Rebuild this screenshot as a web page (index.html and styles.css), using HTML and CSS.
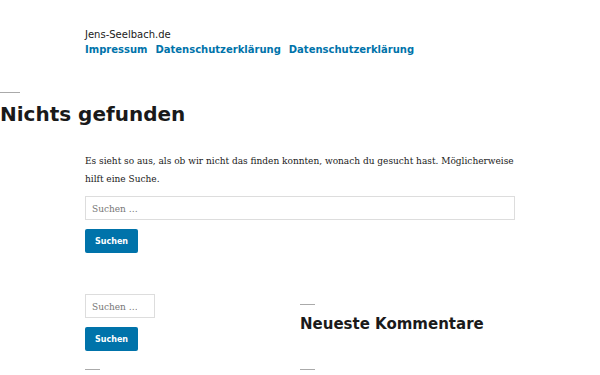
FILE: index.html
```html
<!DOCTYPE html>
<html lang="de">
<head>
	<meta charset="UTF-8">
	<title>Nichts gefunden – Jens-Seelbach.de</title>
	<link rel="stylesheet" href="styles.css">
</head>
<body>
	<header class="site-header">
		<p class="site-title">Jens-Seelbach.de</p>
		<nav class="site-nav">
			<a href="#">Impressum</a>
			<a href="#">Datenschutzerklärung</a>
			<a href="#">Datenschutzerklärung</a>
		</nav>
	</header>

	<main class="site-main">
		<div class="page-header">
			<hr class="sep sep-wide">
			<h1 class="page-title">Nichts gefunden</h1>
		</div>
		<div class="page-content">
			<p>Es sieht so aus, als ob wir nicht das finden konnten, wonach du gesucht hast. Möglicherweise hilft eine Suche.</p>
			<form class="search-form">
				<input type="search" class="search-field" placeholder="Suchen …">
				<button type="button" class="search-submit">Suchen</button>
			</form>
		</div>
	</main>

	<aside class="widgets">
		<div class="widget">
			<form class="search-form small">
				<input type="search" class="search-field" placeholder="Suchen …">
				<button type="button" class="search-submit">Suchen</button>
			</form>
			<hr class="sep">
		</div>
		<div class="widget">
			<hr class="sep">
			<h2 class="widget-title">Neueste Kommentare</h2>
			<hr class="sep">
		</div>
	</aside>
</body>
</html>
```

FILE: styles.css
```css
body{
	margin: 0;
	background: #fff;
	color: #1a1a1a;
	font-family: "DejaVu Sans", sans-serif;
}
.site-header{
	padding: 27px 0 0 85px;
}
.site-title{
	margin: 0;
	font-size: 10px;
	line-height: 15px;
	color: #1a1a1a;
}
.site-nav{
	display: flex;
	gap: 8px;
}
.site-nav a{
	font-size: 10px;
	line-height: 15px;
	font-weight: bold;
	color: #0073aa;
	text-decoration: none;
}
.sep{
	margin: 0;
	border: 0;
	height: 1px;
	width: 15px;
	background: #aaa;
}
.sep-wide{
	width: 20px;
}
.site-main{
	margin-top: 35px;
}
.page-title{
	margin: 9px 0 0;
	font-size: 20px;
	line-height: 24px;
	font-weight: bold;
}
.page-content{
	padding: 26px 0 0 85px;
	width: 430px;
}
.page-content p{
	margin: 0;
	font-family: "DejaVu Serif Condensed", "DejaVu Serif", serif;
	font-size: 10px;
	line-height: 18px;
	color: #1a1a1a;
}
.search-form{
	margin-top: 8px;
}
.search-field{
	display: block;
	box-sizing: border-box;
	width: 430px;
	height: 24px;
	margin: 0;
	padding: 0 6px;
	border: 1px solid #ddd;
	font-family: "DejaVu Serif Condensed", "DejaVu Serif", serif;
	font-size: 10px;
	color: #1a1a1a;
}
.search-field::placeholder{
	color: #777;
}
.search-submit{
	display: block;
	margin-top: 9px;
	height: 24px;
	padding: 0 10px;
	border: 0;
	border-radius: 2px;
	background: #0073aa;
	color: #fff;
	font-family: "DejaVu Sans", sans-serif;
	font-size: 8px;
	font-weight: bold;
}
.widgets{
	display: flex;
	margin-top: 41px;
	padding-left: 85px;
}
.widget{
	width: 215px;
}
.search-form.small{
	margin-top: 0;
}
.search-form.small .search-field{
	width: 70px;
}
.search-form.small + .sep{
	margin-top: 18px;
}
.widget-title{
	margin: 9px 0 35px;
	font-size: 15px;
	line-height: 20px;
	font-weight: bold;
}
.widget:last-child > .sep:first-child{
	margin-top: 10px;
}
```
